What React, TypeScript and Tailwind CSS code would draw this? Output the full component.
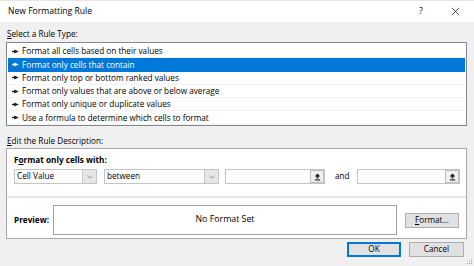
import { ReactNode } from 'react'

const font = "font-['Open_Sans','Noto_Sans',sans-serif]"

const ruleTypes = [
  'Format all cells based on their values',
  'Format only cells that contain',
  'Format only top or bottom ranked values',
  'Format only values that are above or below average',
  'Format only unique or duplicate values',
  'Use a formula to determine which cells to format',
]

function RuleArrow({ color }: { color: string }) {
  return (
    <svg width="7" height="5" viewBox="0 0 7 5" className="shrink-0">
      <rect x="0" y="1.8" width="3" height="1.4" fill={color} />
      <polygon points="2.2,0.6 6.8,2.5 2.2,4.4" fill={color} />
    </svg>
  )
}

function Combo({ value, width }: { value: string; width: string }) {
  return (
    <div className={`${width} h-[15px] bg-white border border-[#c4c4c4] flex items-center shrink-0`}>
      <span className="flex-1 pl-[2px] text-[8.2px] leading-none text-black">{value}</span>
      <div className="w-[14px] h-full bg-[#e6e6e6] border-l border-[#c8c8c8] flex items-center justify-center">
        <svg width="6" height="4" viewBox="0 0 6 4">
          <path d="M0.5 0.8 L3 3.2 L5.5 0.8" fill="none" stroke="#8a8a8a" strokeWidth="0.9" />
        </svg>
      </div>
    </div>
  )
}

function RefBox({ width }: { width: string }) {
  return (
    <div className={`${width} h-[15px] bg-white border border-[#c4c4c4] flex items-center justify-end shrink-0`}>
      <div className="w-[14px] h-[13px] bg-[#f0f0f0] border border-[#bdbdbd] flex items-center justify-center">
        <svg width="7" height="8" viewBox="0 0 7 8">
          <polygon points="3.5,0.5 6.3,3.5 4.4,3.5 4.4,5.6 2.6,5.6 2.6,3.5 0.7,3.5" fill="#1a1a1a" />
          <rect x="0.8" y="6.4" width="5.4" height="1.1" fill="#1a1a1a" />
        </svg>
      </div>
    </div>
  )
}

function Button({ children, width, primary }: { children: ReactNode; width: string; primary?: boolean }) {
  return (
    <button
      className={`${width} h-[15px] bg-[#e1e1e1] text-[8.2px] leading-none text-black flex items-center justify-center ${
        primary ? 'border-2 border-[#0078d7]' : 'border border-[#adadad]'
      }`}
    >
      {children}
    </button>
  )
}

export default function App() {
  return (
    <div className={`w-[474px] h-[266px] bg-[#f0f0f0] flex flex-col overflow-hidden relative ${font}`}>
      {/* Title bar */}
      <div className="h-[22px] bg-white border-t border-[#e6e6e6] flex items-center pl-[8px] shrink-0">
        <span className="text-[8.6px] leading-none text-black">New Formatting Rule</span>
        <div className="flex-1" />
        <span className="text-[8.6px] leading-none text-black w-[6px] mr-[26px]">?</span>
        <svg width="9" height="9" viewBox="0 0 9 9" className="mr-[14px]">
          <path d="M0.8 0.8 L8.2 8.2 M8.2 0.8 L0.8 8.2" stroke="#222" strokeWidth="0.8" />
        </svg>
      </div>

      {/* Rule type */}
      <div className="pl-[7px] pt-[8px] h-[20px] text-[8.2px] leading-none text-black">
        <u>S</u>elect a Rule Type:
      </div>
      <div className="ml-[6px] w-[461px] h-[84px] bg-white border border-[#828790] pt-[2px] px-[1px]">
        {ruleTypes.map((t, i) => {
          const sel = i === 1
          return (
            <div
              key={t}
              className={`h-[13.3px] flex items-center gap-[3px] pl-[4px] text-[8.2px] leading-none ${
                sel ? 'bg-[#0078d7] text-white' : 'text-black border-b border-[#f3f3f3]'
              }`}
            >
              <RuleArrow color={sel ? '#ffffff' : '#1a1a1a'} />
              <span>{t}</span>
            </div>
          )
        })}
      </div>

      {/* Rule description */}
      <div className="pl-[7px] pt-[11px] h-[22px] text-[8.2px] leading-none text-black">
        <u>E</u>dit the Rule Description:
      </div>
      <div className="ml-[6px] w-[461px] h-[91px] bg-white border border-[#a9a9a9] flex flex-col">
        <div className="pl-[7px] pt-[7px] h-[20px] text-[8.2px] leading-none font-bold text-black">
          F<u>o</u>rmat only cells with:
        </div>
        <div className="flex items-center pl-[7px]">
          <Combo value="Cell Value" width="w-[83px]" />
          <div className="w-[7px]" />
          <Combo value="between" width="w-[115px]" />
          <div className="w-[6px]" />
          <RefBox width="w-[100px]" />
          <span className="w-[32px] pl-[10px] text-[8.2px] leading-none text-black">and</span>
          <RefBox width="w-[103px]" />
        </div>
        <div className="mt-[12px] h-[2px] bg-[#e6e6e6]" />
        <div className="flex items-center pl-[7px] mt-[7px]">
          <span className="w-[39px] text-[8.2px] leading-none font-bold text-black">Preview:</span>
          <div className="w-[344px] h-[30px] border border-[#a0a0a0] flex items-center justify-center text-[8.8px] text-black">
            No Format Set
          </div>
          <div className="w-[8px]" />
          <Button width="w-[54px]">
            <u>F</u>ormat...
          </Button>
        </div>
      </div>

      {/* Bottom buttons */}
      <div className="flex justify-end gap-[8px] pr-[10px] pt-[3px]">
        <Button width="w-[54px]" primary>
          OK
        </Button>
        <Button width="w-[55px]">Cancel</Button>
      </div>

      {/* Resize grip */}
      <svg width="6" height="6" viewBox="0 0 6 6" className="absolute right-[1px] bottom-[1px]">
        <rect x="4" y="0" width="1" height="1" fill="#a0a0a0" />
        <rect x="2" y="2" width="1" height="1" fill="#a0a0a0" />
        <rect x="4" y="2" width="1" height="1" fill="#a0a0a0" />
        <rect x="0" y="4" width="1" height="1" fill="#a0a0a0" />
        <rect x="2" y="4" width="1" height="1" fill="#a0a0a0" />
        <rect x="4" y="4" width="1" height="1" fill="#a0a0a0" />
      </svg>
    </div>
  )
}
